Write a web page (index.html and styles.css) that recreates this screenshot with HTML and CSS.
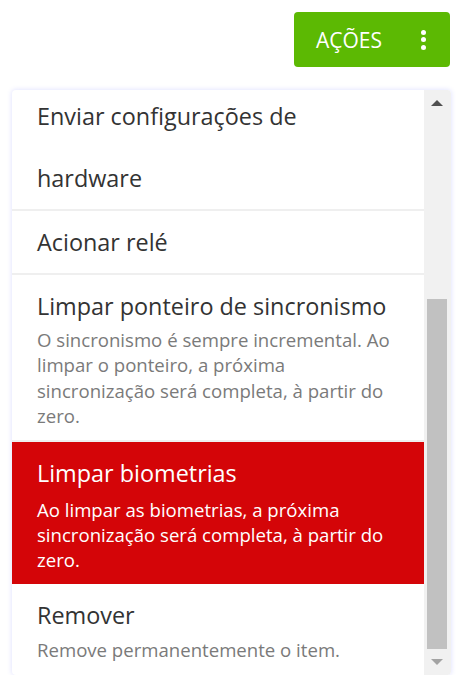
FILE: index.html
```html
<!DOCTYPE html>
<html lang="pt-BR">
<head>
<meta charset="utf-8">
<title>Ações</title>
<link rel="stylesheet" href="styles.css">
</head>
<body>
<div class="toolbar">
  <button class="actions-btn" type="button">
    <span class="actions-label">AÇÕES</span>
    <span class="kebab"><i></i><i></i><i></i></span>
  </button>
</div>
<div class="menu">
  <div class="menu-list">
    <div class="menu-inner">
      <div class="item item-simple">Enviar configurações de hardware</div>
      <div class="item item-simple">Acionar relé</div>
      <div class="item">
        <div class="item-title">Limpar ponteiro de sincronismo</div>
        <div class="item-desc">O sincronismo é sempre incremental. Ao limpar o ponteiro, a próxima sincronização será completa, à partir do zero.</div>
      </div>
      <div class="item item-active">
        <div class="item-title">Limpar biometrias</div>
        <div class="item-desc">Ao limpar as biometrias, a próxima sincronização será completa, à partir do zero.</div>
      </div>
      <div class="item item-last">
        <div class="item-title">Remover</div>
        <div class="item-desc">Remove permanentemente o item.</div>
      </div>
    </div>
  </div>
  <div class="scrollbar">
    <div class="sb-btn"><span class="tri-up"></span></div>
    <div class="sb-track"><div class="sb-thumb"></div></div>
    <div class="sb-btn"><span class="tri-down"></span></div>
  </div>
</div>
</body>
</html>
```
FILE: styles.css
```css
html, body {
  margin: 0;
  padding: 0;
  background: #ffffff;
}
body {
  font-family: "Open Sans", "Noto Sans", sans-serif;
  color: #333333;
}
.toolbar {
  display: flex;
  justify-content: flex-end;
  padding: 12px 13px 0 0;
}
.actions-btn {
  width: 156px;
  height: 55px;
  background: #5cb903;
  border: none;
  border-radius: 4px;
  color: #ffffff;
  font-family: "Open Sans", "Noto Sans", sans-serif;
  font-size: 21px;
  display: flex;
  align-items: center;
  padding: 0 0 0 22px;
  box-sizing: border-box;
}
.kebab {
  display: flex;
  flex-direction: column;
  gap: 2.5px;
  margin-left: 39px;
}
.kebab i {
  display: block;
  width: 5px;
  height: 5px;
  border-radius: 50%;
  background: #ffffff;
}
.menu {
  display: flex;
  margin: 23px 0 0 12px;
  width: 439px;
  height: 585px;
  border-radius: 4px;
  overflow: hidden;
  box-shadow: 0 0 4px 1px rgba(120, 130, 255, 0.18);
  background: #ffffff;
}
.menu-list {
  flex: 1;
  overflow: hidden;
}
.menu-inner {
  margin-top: -5px;
}
.item {
  padding: 16px 25px 11px;
  border-bottom: 2px solid #efefef;
}
.item-simple {
  padding: 0 25px;
  font-size: 23.4px;
  line-height: 62px;
}
.item-title {
  font-size: 23.4px;
  line-height: 30px;
  color: #333333;
}
.item-desc {
  margin-top: 6px;
  font-size: 18.6px;
  line-height: 25.4px;
  color: #7a7a7a;
}
.item-active {
  background: #d40508;
  border-bottom: none;
  padding-bottom: 11px;
}
.item-active .item-title,
.item-active .item-desc {
  color: #ffffff;
}
.item-active .item-desc {
  margin-top: 9px;
}
.item-last {
  border-bottom: none;
  padding-top: 16px;
}
.item-last .item-desc {
  margin-top: 7px;
}
.scrollbar {
  width: 27px;
  background: #f1f1f1;
  display: flex;
  flex-direction: column;
}
.sb-btn {
  height: 26px;
  display: flex;
  align-items: center;
  justify-content: center;
  padding-right: 1px;
}
.tri-up {
  width: 0;
  height: 0;
  border-left: 6px solid transparent;
  border-right: 6px solid transparent;
  border-bottom: 6px solid #505050;
}
.tri-down {
  width: 0;
  height: 0;
  border-left: 6px solid transparent;
  border-right: 6px solid transparent;
  border-top: 6px solid #a3a3a3;
}
.sb-track {
  flex: 1;
  display: flex;
  flex-direction: column;
  justify-content: flex-end;
  padding: 0 4px 0 3px;
}
.sb-thumb {
  height: 350px;
  background: #c1c1c1;
}
```
